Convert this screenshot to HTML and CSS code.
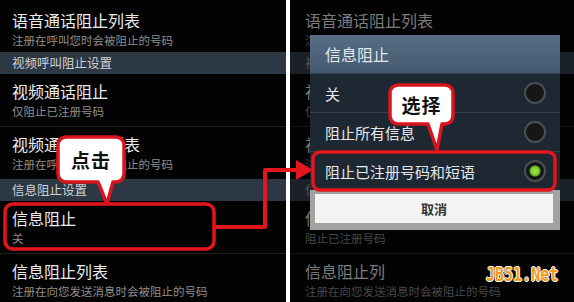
FILE: index.html
```html
<!DOCTYPE html>
<html lang="zh-CN">
<head>
    <meta charset="UTF-8">
    <meta name="viewport" content="width=device-width, initial-scale=1.0">
    <title>信息阻止</title>
    <link rel="stylesheet" href="styles.css">
</head>
<body>
    <div class="screens">
        <section class="phone phone-left">
            <div class="item item-first">
                <div class="item-title">语音通话阻止列表</div>
                <div class="item-sub">注册在呼叫您时会被阻止的号码</div>
            </div>
            <div class="group">视频呼叫阻止设置</div>
            <div class="item item-line">
                <div class="item-title">视频通话阻止</div>
                <div class="item-sub">仅阻止已注册号码</div>
            </div>
            <div class="item">
                <div class="item-title">视频通话阻止列表</div>
                <div class="item-sub">注册在呼叫您时会被阻止的号码</div>
            </div>
            <div class="group">信息阻止设置</div>
            <div class="item item-line">
                <div class="item-title">信息阻止</div>
                <div class="item-sub">关</div>
            </div>
            <div class="item">
                <div class="item-title">信息阻止列表</div>
                <div class="item-sub">注册在向您发送消息时会被阻止的号码</div>
            </div>
        </section>

        <section class="phone phone-right">
            <div class="item item-first">
                <div class="item-title">语音通话阻止列表</div>
                <div class="item-sub">注册在呼叫您时会被阻止的号码</div>
            </div>
            <div class="group">视频呼叫阻止设置</div>
            <div class="item item-line">
                <div class="item-title">视频通话阻止</div>
                <div class="item-sub">仅阻止已注册号码</div>
            </div>
            <div class="item">
                <div class="item-title">视频通话阻止列表</div>
                <div class="item-sub">注册在呼叫您时会被阻止的号码</div>
            </div>
            <div class="group">信息阻止设置</div>
            <div class="item item-line">
                <div class="item-title">信息阻止</div>
                <div class="item-sub">阻止已注册号码</div>
            </div>
            <div class="item">
                <div class="item-title">信息阻止列</div>
                <div class="item-sub">注册在向您发送消息时会被阻止的号码</div>
            </div>
        </section>

        <!-- popup over the right screen -->
        <div class="dialog">
            <div class="dialog-title">信息阻止</div>
            <div class="option">
                <span>关</span>
                <span class="radio"></span>
            </div>
            <div class="option">
                <span>阻止所有信息</span>
                <span class="radio"></span>
            </div>
            <div class="option">
                <span>阻止已注册号码和短语</span>
                <span class="radio radio-on"></span>
            </div>
            <div class="dialog-foot">
                <button type="button" class="btn-cancel">取消</button>
            </div>
        </div>

        <!-- red annotations -->
        <svg class="marks" width="574" height="302" viewBox="0 0 574 302">
            <rect x="5" y="204" width="209" height="45" rx="8" class="mark-box" />
            <rect x="313" y="152" width="242" height="38" rx="7" class="mark-box" />
            <polyline points="214,227 265,227 265,170 299,170" class="mark-line" />
            <polygon points="296,160 313,170 296,180" class="mark-head" />
        </svg>

        <div class="callout callout-click">
            <svg width="70" height="71" viewBox="0 0 70 71">
                <path d="M10,2 H60 A8,8 0 0 1 68,10 V39 A8,8 0 0 1 60,47 H57 L51,69 L42,47 H10 A8,8 0 0 1 2,39 V10 A8,8 0 0 1 10,2 Z" />
            </svg>
            <span class="callout-text">点击</span>
        </div>

        <div class="callout callout-pick">
            <svg width="67" height="69" viewBox="0 0 67 69">
                <path d="M10,2 H57 A8,8 0 0 1 65,10 V33 A8,8 0 0 1 57,41 H54 L49,67 L40,41 H10 A8,8 0 0 1 2,33 V10 A8,8 0 0 1 10,2 Z" />
            </svg>
            <span class="callout-text">选择</span>
        </div>

        <div class="watermark">JB51.Net</div>
    </div>
</body>
</html>
```

FILE: styles.css
```css
body {
    margin: 0;
    background-color: #fff;
    font-family: "Noto Sans CJK SC", sans-serif;
}

.screens {
    position: relative;
    display: flex;
    gap: 4px;
    width: 574px;
    height: 302px;
    overflow: hidden;
}

.phone {
    background-color: #030303;
    overflow: hidden;
    white-space: nowrap;
}

.phone-left {
    width: 286px;
}

.phone-right {
    flex: 1;
}

.item {
    padding: 7px 12px;
}

.item-first {
    padding-top: 10px;
    padding-bottom: 4px;
}

.item-line {
    border-bottom: 1px solid #1e1e1e;
}

.item-title {
    font-size: 16px;
    line-height: 20px;
    color: #ececec;
}

.item-sub {
    margin-top: 2px;
    font-size: 11.5px;
    line-height: 16px;
    color: #8e8e8e;
}

.group {
    height: 22px;
    line-height: 22px;
    padding-left: 12px;
    font-size: 12.5px;
    color: #cfd4d8;
    background-color: #2c3843;
}

/* dimmed list behind the popup */
.phone-right .item,
.phone-right .group {
    padding-left: 15px;
}

.phone-right .item-title {
    color: #7c7c7c;
}

.phone-right .item-sub {
    color: #484848;
}

.phone-right .group {
    color: #555;
    background-color: #1a2128;
}

.phone-right .item-line {
    border-bottom-color: #141414;
}

.dialog {
    position: absolute;
    left: 310px;
    top: 35px;
    width: 250px;
    display: flex;
    flex-direction: column;
    background-color: #1d2832;
}

.dialog-title {
    height: 38px;
    line-height: 38px;
    padding-left: 15px;
    font-size: 16px;
    color: #e4e9ee;
    background: linear-gradient(#566d84, #435a70);
}

.option {
    display: flex;
    align-items: center;
    justify-content: space-between;
    height: 38px;
    padding: 0 14px 0 15px;
    font-size: 15px;
    color: #e6e9ec;
    border-top: 1px solid #36424e;
}

.option:first-of-type {
    height: 40px;
    border-top: none;
}

.radio {
    box-sizing: border-box;
    width: 22px;
    height: 22px;
    border-radius: 50%;
    border: 2px solid #4a4f55;
    background-color: #141618;
}

.radio-on {
    background: radial-gradient(circle, #a6e84a 0, #7ccb2c 4px, #5fa11d 5px, #141618 6px);
}

.dialog-foot {
    padding: 4px 7px 7px 5px;
    background-color: #a2a2a2;
}

.btn-cancel {
    display: block;
    width: 100%;
    height: 29px;
    border: none;
    background-color: #f3f3f3;
    font-family: "Noto Sans CJK SC", sans-serif;
    font-size: 13px;
    font-weight: 700;
    color: #333;
}

.marks {
    position: absolute;
    left: 0;
    top: 0;
}

.mark-box {
    fill: none;
    stroke: #e3161e;
    stroke-width: 3.5;
}

.mark-line {
    fill: none;
    stroke: #e3161e;
    stroke-width: 4;
    stroke-linejoin: round;
}

.mark-head {
    fill: #e3161e;
}

.callout {
    position: absolute;
}

.callout svg {
    position: absolute;
    left: 0;
    top: 0;
}

.callout path {
    fill: #fff;
    stroke: #d9141c;
    stroke-width: 3.5;
    stroke-linejoin: round;
}

.callout-text {
    position: absolute;
    left: 0;
    right: 0;
    display: flex;
    align-items: center;
    justify-content: center;
    font-size: 19px;
    font-weight: 700;
    color: #111;
    letter-spacing: 1px;
}

.callout-click {
    left: 56px;
    top: 135px;
    width: 70px;
    height: 71px;
}

.callout-click .callout-text {
    top: 2px;
    height: 45px;
}

.callout-pick {
    left: 388px;
    top: 83px;
    width: 67px;
    height: 69px;
}

.callout-pick .callout-text {
    top: 2px;
    height: 39px;
}

.watermark {
    position: absolute;
    left: 486px;
    top: 262px;
    font-family: "DejaVu Sans Mono", monospace;
    font-size: 15px;
    font-weight: 700;
    color: #f29a1c;
    text-shadow: 1px 0 #fff, -1px 0 #fff, 0 1px #fff, 0 -1px #fff;
    transform: scaleY(1.35);
    transform-origin: left top;
}
```
